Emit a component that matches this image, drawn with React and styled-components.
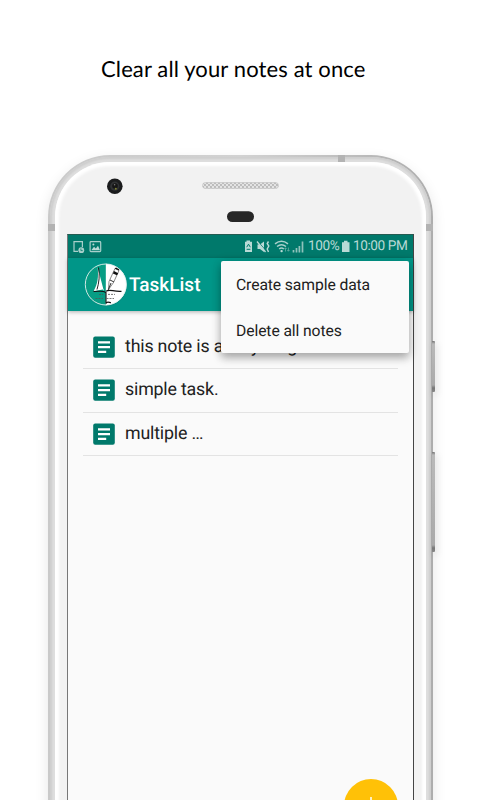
import React from "react";
import styled, { createGlobalStyle } from "styled-components";

const GlobalStyle = createGlobalStyle`
  * { box-sizing: border-box; }
  body { margin: 0; background: #fff; font-family: Roboto, sans-serif; text-rendering: geometricPrecision; }
`;

const Page = styled.main`
  width: 480px;
  height: 800px;
  overflow: hidden;
  background: #fff;
  display: flex;
  flex-direction: column;
`;

const Caption = styled.h1`
  margin: 0;
  height: 155px;
  flex: none;
  padding: 55px 0 0 101px;
  font: 400 22px/28px Lato, sans-serif;
  letter-spacing: 0.12px;
  color: #000;
  white-space: nowrap;
`;

const Phone = styled.section`
  position: relative;
  flex: none;
  width: 385px;
  height: 760px;
  margin-left: 48px;
  padding: 2px;
  border-radius: 62px 62px 0 0;
  background: linear-gradient(90deg, #c9c9c9, #d2d2d2 50%, #adadad);
  box-shadow: 0 5px 14px rgba(0, 0, 0, 0.1);
`;

const Rim = styled.div`
  height: 100%;
  padding: 5px;
  border-radius: 60px 60px 0 0;
  background: #dedede;
  box-shadow: inset 0 0 2px 2px #cecece;
`;

const Face = styled.div`
  height: 100%;
  padding: 0 12px;
  display: flex;
  flex-direction: column;
  border-radius: 55px 55px 0 0;
  background: #f2f2f2;
  box-shadow: inset 0 0 3px 4px #fff;
`;

const Antenna = styled.i`
  position: absolute;
  width: 7px;
  height: 7px;
  background: #b3b3b3;
  left: ${(p) => p.$x}px;
  top: ${(p) => p.$y}px;
`;

const SideKey = styled.i`
  position: absolute;
  left: 384px;
  top: ${(p) => p.$y}px;
  width: 3px;
  height: ${(p) => p.$h}px;
  border-radius: 0 1px 1px 0;
  background: linear-gradient(#777, #b9b9b9 3px, #aaa calc(100% - 7px), #777 calc(100% - 4px), #888);
  box-shadow: 2px 3px 7px rgba(0, 0, 0, 0.12);
`;

const Forehead = styled.div`
  position: relative;
  flex: none;
  height: 72px;
`;

const Sensors = styled.svg`
  display: block;
  width: 347px;
  height: 72px;
`;

const Screen = styled.div`
  position: relative;
  width: 347px;
  height: 700px;
  flex: none;
  border: 1px solid #444;
  border-left-color: #777;
  border-bottom: 0;
  border-top-color: #245c52;
  background: #fafafa;
`;

const StatusBar = styled.div`
  height: 23px;
  display: flex;
  align-items: center;
  background: #00796b;
  color: #b9dad6;
`;

const StatusIcons = styled.svg`
  display: block;
  flex: none;
  width: ${(p) => p.$w}px;
  height: 23px;
`;

const StatusText = styled.span`
  flex: none;
  font-size: 13.6px;
  line-height: 23px;
  letter-spacing: ${(p) => p.$track || 0}px;
  white-space: nowrap;
  width: ${(p) => p.$w}px;
`;

const Toolbar = styled.header`
  height: 53px;
  display: flex;
  align-items: center;
  padding-left: 16px;
  background: #009688;
  color: #fff;
  box-shadow: 0 1px 4px rgba(0, 0, 0, 0.3);
`;

const Logo = styled.svg`
  width: 44px;
  height: 44px;
  flex: none;
`;

const Title = styled.h2`
  margin: 0 0 0 1px;
  font-size: 19px;
  font-weight: 500;
  line-height: 24px;
`;

const NoteList = styled.ul`
  list-style: none;
  margin: 15px 15px 0 15px;
  padding: 0;
`;

const Note = styled.li`
  height: 43.3px;
  display: flex;
  align-items: center;
  gap: 10px;
  padding-left: 10px;
  border-bottom: 1.5px solid #e3e3e3;
  font-size: 17.8px;
  letter-spacing: -0.18px;
  line-height: 24px;
  color: #212121;
  white-space: nowrap;
`;

const NoteIcon = styled.svg`
  width: 22px;
  height: 22px;
  flex: none;
`;

const Menu = styled.div`
  position: absolute;
  left: 153px;
  top: 26px;
  width: 188px;
  height: 92px;
  border-radius: 2px;
  background: #fafafa;
  box-shadow: 0 5px 9px rgba(0, 0, 0, 0.28), 0 1px 12px rgba(0, 0, 0, 0.12);
`;

const MenuItem = styled.div`
  height: 46px;
  padding-left: 15px;
  font-size: 15.7px;
  letter-spacing: -0.1px;
  line-height: 47px;
  color: #212121;
  white-space: nowrap;
`;

const AddButton = styled.button`
  position: absolute;
  left: 276px;
  top: 544px;
  width: 54px;
  height: 54px;
  padding: 0;
  border: 0;
  border-radius: 50%;
  background: #ffc107;
  display: grid;
  place-items: center;
`;

const notes = ["this note is a very long", "simple task.", "multiple …"];

function ForeheadParts() {
  return (
    <Forehead>
      <Sensors viewBox="67 162 347 72">
        <defs>
          <pattern id="mesh" width="4" height="4" patternUnits="userSpaceOnUse">
            <rect width="4" height="4" fill="#e3e3e3" />
            <circle cx="1" cy="1" r="0.9" fill="#aaa" />
            <circle cx="3" cy="3" r="0.9" fill="#aaa" />
          </pattern>
        </defs>
        <circle cx="114.8" cy="186.2" r="7.8" fill="#1b1c1d" />
        <circle cx="114.8" cy="186.2" r="4.6" fill="#303234" />
        <circle cx="115" cy="186" r="2.8" fill="#151515" />
        <circle cx="115.8" cy="188.8" r="1" fill="#7e8030" />
        <circle cx="114.6" cy="184.8" r="0.8" fill="#777" />
        <rect x="202.5" y="182.5" width="76" height="6" rx="3" fill="url(#mesh)" stroke="#c4c4c4" strokeWidth="0.7" />
        <rect x="227" y="211.3" width="27" height="10.7" rx="5.3" fill="#272727" />
      </Sensors>
    </Forehead>
  );
}

function LeftStatus() {
  return (
    <StatusIcons $w={175} viewBox="68 234 175 23">
      <g fill="none" stroke="#a9d0cb" strokeWidth="1.2">
        <path d="M78 250.4H74V240.6H82.4V246" />
        <rect x="90.1" y="240.6" width="10.6" height="10" rx="0.8" />
      </g>
      <circle cx="81.3" cy="249.2" r="2.9" fill="#a9d0cb" />
      <path d="M80.9 247.5V249.6H82.7" fill="none" stroke="#00796b" strokeWidth="0.8" />
      <path d="M91.3 249.3L94 245.8L95.8 247.6L98 244.8L100 249.3Z" fill="#b9dad6" />
      <circle cx="93.4" cy="243.5" r="1" fill="#b9dad6" />
    </StatusIcons>
  );
}

function SignalIcons() {
  return (
    <StatusIcons $w={65} viewBox="243 234 65 23">
      <path d="M245 240.8H246.5V239.5H250V240.8H252V251H245Z" fill="#b9dad6" />
      <path d="M246.7 246.2L248.5 243.2L250.3 246.2M246.6 248.3H250.4" fill="none" stroke="#00796b" strokeWidth="1" />
      <path d="M257.5 243.5H260L264 240.5V251L260 248H257.5Z" fill="#b9dad6" />
      <path d="M257.8 240.2L266.6 250.6" stroke="#00796b" strokeWidth="1" />
      <path d="M257 240.5L265.5 251" stroke="#b9dad6" strokeWidth="1.3" />
      <path d="M268.5 240.5L267.2 242.5L268.8 245L267.2 248L268.5 251" fill="none" stroke="#b9dad6" strokeWidth="1.4" />
      <g fill="none" stroke="#a9d0cb" strokeWidth="1.5">
        <path d="M275 242.8Q281.5 237.8 288 242.8" />
        <path d="M277 245.5Q281.5 242 286 245.5" />
        <path d="M279.2 248Q281.5 246.2 283.8 248" />
      </g>
      <circle cx="281.6" cy="250.1" r="1.2" fill="#b9dad6" />
      <path d="M285.5 246.8V250.5M284.4 248L285.5 246.8L286.6 248M288.4 246.5V250.2M287.3 249L288.4 250.2L289.5 249" fill="none" stroke="#69ada4" strokeWidth="0.8" />
      <path d="M293.5 249V251.4M296.5 247V251.4M299.4 245V251.4M302.5 240.6V251.4" stroke="#8fc2bb" strokeWidth="1.7" />
    </StatusIcons>
  );
}

function BatteryIcon() {
  return (
    <StatusIcons $w={13} viewBox="340 234 13 23">
      <path d="M342 241.2H344V239.8H347.5V241.2H349.5V251H342Z" fill="#b9dad6" />
    </StatusIcons>
  );
}

function TaskLogo() {
  return (
    <Logo viewBox="84 262 44 44">
      <circle cx="106" cy="284.5" r="20.8" fill="#087f74" opacity="0.5" />
      <circle cx="105.8" cy="283.5" r="20.7" fill="#079d84" />
      <path d="M105.8 262.8A20.7 20.7 0 0 1 105.8 304.2Z" fill="#fff" />
      <circle cx="105.8" cy="283.5" r="20.5" fill="none" stroke="#e5f2ef" strokeWidth="0.9" />
      <path d="M97.7 266.5C98.5 276 98 282 93.6 290.3L104 288.3V290.6Z" fill="#fff" />
      <path d="M98.5 266.5C100 274 99 282 97 288.5" fill="none" stroke="#111" strokeWidth="0.9" />
      <path d="M93.5 290.4C98 290.8 102 289 106 291.5V302.5C107 299.8 109 301.5 111 301.8" fill="none" stroke="#111" strokeWidth="1.1" />
      <path d="M106 290.2C110 287.5 113 291 121.5 290.4" fill="none" stroke="#111" strokeWidth="1.3" />
      <path d="M108.5 288.5L109 280.5L115 267.5L119 269.5L113.5 281.5Z" fill="#fff" stroke="#555" strokeWidth="0.7" />
      <path d="M114 270L118.2 272.2L116.9 274.2L112.9 272.4ZM114.6 267.5L116 266.5L119.2 268.2L119 269.6Z" fill="#111" />
      <path d="M110 279L114 281M108.2 289L111 282" stroke="#333" strokeWidth="1" />
      <path d="M99 293.5H103M108 293.4H115M95.5 297.5H103M106.5 297.5H114" stroke="#555" strokeWidth="0.8" strokeDasharray="2 1" />
    </Logo>
  );
}

function ArticleIcon() {
  return (
    <NoteIcon viewBox="0 0 22 22">
      <rect x="0.2" y="0.4" width="21.6" height="21.4" rx="2" fill="#00796b" />
      <path d="M5 6.3H17M5 11.1H17M5 15.9H13.2" stroke="#fff" strokeWidth="2.2" />
    </NoteIcon>
  );
}

export default function App() {
  return (
    <Page>
      <GlobalStyle />
      <Caption>Clear all your notes at once</Caption>
      <Phone>
        <SideKey $y={186} $h={51} />
        <SideKey $y={297} $h={100} />
        <Rim>
          <Face>
            <ForeheadParts />
            <Screen>
              <StatusBar>
                <LeftStatus />
                <SignalIcons />
                <StatusText $w={32} $track={-0.35}>100%</StatusText>
                <BatteryIcon />
                <StatusText $w={56} $track={-0.4}>10:00 PM</StatusText>
              </StatusBar>
              <Toolbar>
                <TaskLogo />
                <Title>TaskList</Title>
              </Toolbar>
              <NoteList>
                {notes.map((note) => (
                  <Note key={note}>
                    <ArticleIcon />
                    {note}
                  </Note>
                ))}
              </NoteList>
              <Menu>
                <MenuItem>Create sample data</MenuItem>
                <MenuItem>Delete all notes</MenuItem>
              </Menu>
              <AddButton aria-label="Add note">
                <svg width="20" height="20" viewBox="0 0 20 20">
                  <path d="M10 1V19M1 10H19" stroke="#fff" strokeWidth="1.5" />
                </svg>
              </AddButton>
            </Screen>
          </Face>
        </Rim>
        <Antenna $x={290} $y={0} />
        <Antenna $x={0} $y={69} />
        <Antenna $x={378} $y={69} />
      </Phone>
    </Page>
  );
}
